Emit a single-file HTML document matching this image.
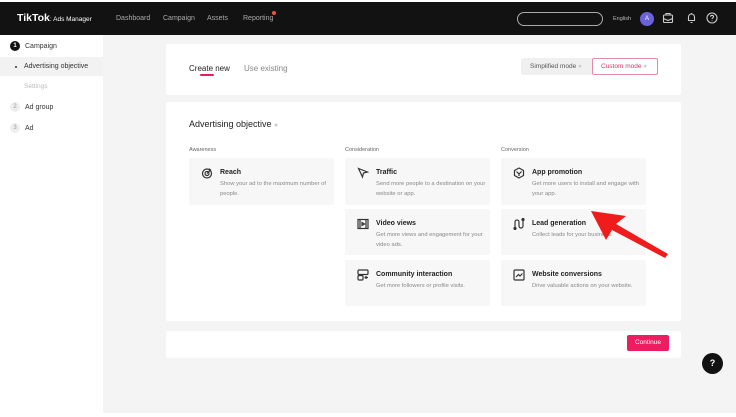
<!DOCTYPE html>
<html><head><meta charset="utf-8"><style>
*{margin:0;padding:0;box-sizing:border-box}
body{width:736px;height:417px;overflow:hidden;background:#fff;font-family:"Liberation Sans",sans-serif;position:relative;color:#222}
.a{position:absolute}
.top{left:0;top:2px;width:736px;height:33px;background:#121212}
.nav{color:#aaa;font-size:7px;top:15px}
.main{left:103px;top:35px;width:633px;height:378px;background:#f4f4f4}
.card{background:#fff;border-radius:2px}
.obj{background:#f7f7f7;width:145px;border-radius:2px}
.obj .t{position:absolute;left:31px;top:11px;font-size:7px;font-weight:bold;color:#222}
.obj .d{position:absolute;left:31px;top:21px;font-size:5.8px;line-height:10px;color:#888;width:112px}
.obj svg{position:absolute;left:12px;top:9px}
.hd{font-size:5.5px;color:#666;top:147px}
.side{font-size:7px;color:#333}
</style></head><body>
<div class="a top"></div>
<div class="a" style="left:17px;top:12px;color:#fff;font-weight:bold;font-size:10.5px">TikTok<span style="font-size:6.5px;font-weight:normal">: Ads Manager</span></div>
<div class="a nav" style="left:116px">Dashboard</div>
<div class="a nav" style="left:163px">Campaign</div>
<div class="a nav" style="left:207px">Assets</div>
<div class="a nav" style="left:243px">Reporting</div>
<div class="a" style="left:272px;top:11px;width:4px;height:4px;border-radius:50%;background:#e8553c"></div>
<div class="a" style="left:517px;top:12px;width:86px;height:14px;border:1px solid #aaa;border-radius:8px"></div>
<div class="a" style="left:613px;top:16px;color:#bbb;font-size:5.5px">English</div>
<div class="a" style="left:640px;top:12px;width:14px;height:14px;border-radius:50%;background:#6a62d8;color:#fff;font-size:6px;text-align:center;line-height:14px">A</div>
<svg class="a" style="left:662px;top:12px" width="12" height="12" viewBox="0 0 12 12" fill="none" stroke="#ccc" stroke-width="1.1"><rect x="1.5" y="3" width="9" height="7.5" rx="1"/><path d="M4 3V1.5h4V3M1.5 6.5l4.5 2 4.5-2"/></svg>
<svg class="a" style="left:686px;top:12px" width="11" height="12" viewBox="0 0 11 12" fill="none" stroke="#ccc" stroke-width="1.1"><path d="M2.5 8.5V5a3 3 0 016 0v3.5H2M4.5 10.5h2M5.5 1v1"/></svg>
<svg class="a" style="left:706px;top:12px" width="12" height="12" viewBox="0 0 12 12" fill="none" stroke="#ccc" stroke-width="1.1"><circle cx="6" cy="6" r="5"/><path d="M4.5 4.8a1.5 1.5 0 113 0c0 1-1.5 1.2-1.5 2.2M6 8.5v.6"/></svg>

<div class="a" style="left:10px;top:41px;width:10px;height:10px;border-radius:50%;background:#111;color:#fff;font-size:6px;text-align:center;line-height:10px;font-weight:bold">1</div>
<div class="a side" style="left:25px;top:43px">Campaign</div>
<div class="a" style="left:0;top:57px;width:103px;height:19px;background:#f2f2f2"></div>
<div class="a" style="left:15px;top:66px;width:2px;height:2px;background:#333;border-radius:50%"></div>
<div class="a side" style="left:24px;top:63px">Advertising objective</div>
<div class="a side" style="left:24px;top:83px;color:#bbb;font-size:6.5px">Settings</div>
<div class="a" style="left:10px;top:102px;width:10px;height:10px;border-radius:50%;background:#eee;color:#999;font-size:6px;text-align:center;line-height:10px">2</div>
<div class="a side" style="left:25px;top:104px">Ad group</div>
<div class="a" style="left:10px;top:123px;width:10px;height:10px;border-radius:50%;background:#eee;color:#999;font-size:6px;text-align:center;line-height:10px">3</div>
<div class="a side" style="left:25px;top:125px">Ad</div>

<div class="a main"></div>
<div class="a card" style="left:166px;top:44px;width:515px;height:51px"></div>
<div class="a" style="left:189px;top:64px;font-size:8px;color:#222">Create new</div>
<div class="a" style="left:200px;top:74px;width:14px;height:2px;background:#e0215e;border-radius:1px"></div>
<div class="a" style="left:244px;top:64px;font-size:8px;color:#888">Use existing</div>
<div class="a" style="left:521px;top:58px;width:72px;height:17px;background:#f0f0f0;border-radius:2px;font-size:6.5px;color:#555;line-height:17px;padding-left:9px">Simplified mode <span style="color:#ccc">●</span></div>
<div class="a" style="left:592px;top:58px;width:66px;height:17px;background:#fff;border:1px solid #e38aa9;border-radius:2px;font-size:6.5px;color:#d9346c;line-height:15px;padding-left:8px">Custom mode <span style="color:#ccc">●</span></div>

<div class="a card" style="left:166px;top:102px;width:515px;height:219px"></div>
<div class="a" style="left:189px;top:119px;font-size:9px;color:#222">Advertising objective <span style="color:#ccc;font-size:7px">●</span></div>
<div class="a hd" style="left:189px">Awareness</div>
<div class="a hd" style="left:345px">Consideration</div>
<div class="a hd" style="left:501px">Conversion</div>

<div class="a obj" style="left:189px;top:158px;height:47px"><svg width="12" height="12" viewBox="0 0 12 12" fill="none" stroke="#333" stroke-width="1.2"><circle cx="6" cy="6.5" r="4.5"/><circle cx="6" cy="6.5" r="2"/><path d="M6 6.5l4-4M8.5 1.5v1.5h1.5"/></svg><div class="t">Reach</div><div class="d">Show your ad to the maximum number of people.</div></div>
<div class="a obj" style="left:345px;top:158px;height:47px"><svg width="12" height="12" viewBox="0 0 12 12" fill="none" stroke="#333" stroke-width="1.2"><path d="M1.5 1.5l9 3.5-4 1-1 4z"/></svg><div class="t">Traffic</div><div class="d">Send more people to a destination on your website or app.</div></div>
<div class="a obj" style="left:345px;top:209px;height:46px"><svg width="12" height="12" viewBox="0 0 12 12" fill="none" stroke="#333" stroke-width="1.2"><rect x="1" y="1.5" width="10" height="9"/><path d="M3 1.5v9M9 1.5v9M5 4.5l2.5 1.5L5 7.5z"/></svg><div class="t">Video views</div><div class="d">Get more views and engagement for your video ads.</div></div>
<div class="a obj" style="left:345px;top:260px;height:46px"><svg width="12" height="12" viewBox="0 0 12 12" fill="none" stroke="#333" stroke-width="1.2"><rect x="1" y="1" width="10" height="4.5" rx="1"/><rect x="1" y="6.5" width="5" height="4.5" rx="1"/><path d="M7.5 8.5h3.5M9 7v3"/></svg><div class="t">Community interaction</div><div class="d">Get more followers or profile visits.</div></div>
<div class="a obj" style="left:501px;top:158px;height:47px"><svg width="12" height="12" viewBox="0 0 12 12" fill="none" stroke="#333" stroke-width="1.2"><path d="M6 1l4.5 2.5v5L6 11 1.5 8.5v-5z"/><path d="M3.5 4.5L6 7l2.5-2.5M6 7v2"/></svg><div class="t">App promotion</div><div class="d">Get more users to install and engage with your app.</div></div>
<div class="a obj" style="left:501px;top:209px;height:46px"><svg width="12" height="12" viewBox="0 0 12 12" fill="none" stroke="#333" stroke-width="1.2"><path d="M2 11V4a2 2 0 014 0v4a2 2 0 004 0V1"/><circle cx="10" cy="1.5" r="1"/><circle cx="2" cy="10.5" r="1"/></svg><div class="t">Lead generation</div><div class="d">Collect leads for your business.</div></div>
<div class="a obj" style="left:501px;top:260px;height:46px"><svg width="12" height="12" viewBox="0 0 12 12" fill="none" stroke="#333" stroke-width="1.2"><rect x="1" y="1" width="10" height="10" rx="1"/><path d="M3 8l2.5-2.5 1.5 1.5L9.5 4.5"/></svg><div class="t">Website conversions</div><div class="d">Drive valuable actions on your website.</div></div>

<div class="a card" style="left:166px;top:331px;width:515px;height:27px"></div>
<div class="a" style="left:627px;top:335px;width:42px;height:16px;background:#ec1e62;border-radius:2px;color:#fff;font-size:6.5px;text-align:center;line-height:16px">Continue</div>
<div class="a" style="left:702px;top:353px;width:21px;height:21px;border-radius:50%;background:#111;color:#fff;font-size:9px;font-weight:bold;text-align:center;line-height:21px">?</div>

<svg class="a" style="left:0;top:0" width="736" height="417"><path d="M591 211 L626 216 L616 224 L668 254 L665 258 L612 230 L606 240 Z" fill="#f01c1c"/></svg>
</body></html>
